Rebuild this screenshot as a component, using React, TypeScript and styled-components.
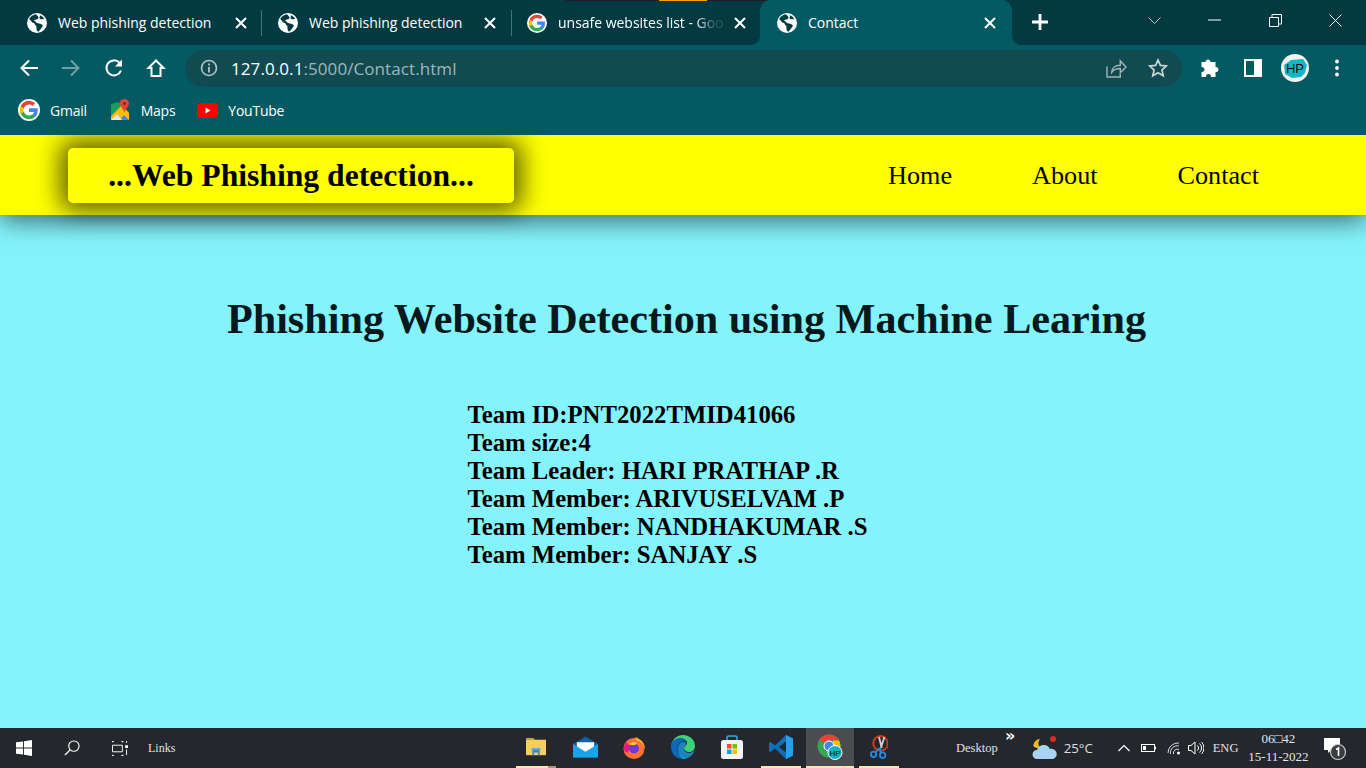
import React from "react";
import styled, { createGlobalStyle } from "styled-components";

const Global = createGlobalStyle`
  html, body { margin: 0; padding: 0; height: 100%; overflow: hidden; }
  body { font-family: "Liberation Serif", serif; background: #85f3fb; }
`;
const Page = styled.div`
  width: 1366px; height: 768px; display: flex; flex-direction: column; overflow: hidden; position: relative;
`;
const TabStrip = styled.div`
  height: 45px; flex: none; background: #033a42; display: flex; align-items: stretch; position: relative;
  font-family: "Open Sans", sans-serif; padding-left: 8px;
`;
const TopEdge = styled.div`
  position: absolute; left: 565px; top: 0; width: 240px; height: 1px;
  background: linear-gradient(90deg, #1c2024 0 94px, #f0a000 94px 142px, #1c2024 142px);
`;
const Tab = styled.div<{ $active?: boolean; $w: number; $pl: number; $pr: number }>`
  width: ${(p) => p.$w}px; flex: none; display: flex; align-items: center; box-sizing: border-box;
  padding: 0 ${(p) => p.$pr}px 0 ${(p) => p.$pl}px;
  color: #fff; font-size: 14px; position: relative; white-space: nowrap; height: 45px;
  ${(p) =>
    p.$active &&
    `background:#045a62; border-radius:10px 10px 0 0;
     &::before, &::after { content:""; position:absolute; bottom:0; width:10px; height:10px; }
     &::before { left:-10px; background: radial-gradient(circle at 0 0, transparent 10px, #045a62 10.5px); }
     &::after { right:-10px; background: radial-gradient(circle at 100% 0, transparent 10px, #045a62 10.5px); }`}
`;
const TabSep = styled.div`
  width: 1px; height: 26px; background: #4a7378; align-self: center; flex: none;
`;
const Favicon = styled.span`
  width: 20px; height: 20px; flex: none; margin-right: 11px; display: flex;
`;
const TabTitle = styled.span<{ $fade?: boolean }>`
  flex: 1; letter-spacing: -0.02px;
  ${(p) => p.$fade && "-webkit-mask-image: linear-gradient(90deg,#000 78%,rgba(0,0,0,.15) 90%);"}
`;
const CloseBox = styled.span`
  width: 14px; height: 14px; display: flex; flex: none;
`;
const NewTab = styled.div`
  width: 16px; height: 44px; margin-left: 20px; display: flex; align-items: center; flex: none;
`;
const WinControls = styled.div`
  margin-left: auto; display: flex; align-items: center; height: 40px; padding-right: 24px;
`;
const WinBtn = styled.span<{ $ml: number }>`
  display: flex; margin-left: ${(p) => p.$ml}px;
`;
const Toolbar = styled.div`
  height: 46px; flex: none; background: #045a62; display: flex; align-items: center; padding-left: 19px; box-sizing: border-box;
`;
const NavIcon = styled.span<{ $ml?: number }>`
  display: flex; width: 20px; height: 20px; margin-left: ${(p) => p.$ml ?? 0}px; flex: none;
`;
const Omnibox = styled.div`
  margin-left: 19px; width: 997px; height: 37px; border-radius: 19px; background: #124a52; flex: none;
  display: flex; align-items: center; padding: 0 14px 0 15px; box-sizing: border-box;
  font-family: "Open Sans", sans-serif; font-size: 17px; color: #9db8bb;
`;
const Host = styled.span`color: #fff;`;
const Url = styled.span`margin-left: 13px; letter-spacing: 0.08px;`;
const OmniRight = styled.div`margin-left: auto; display: flex; align-items: center; gap: 21px;`;
const Avatar = styled.span`
  width: 28px; height: 28px; margin-left: 18px; flex: none; display: flex;
`;
const Bookmarks = styled.div`
  height: 44px; flex: none; background: #045a62; display: flex; align-items: center; padding: 0 0 6px 18px; box-sizing: border-box;
  font-family: "Open Sans", sans-serif; font-size: 14px; color: #fff; letter-spacing: -0.25px;
`;
const Bookmark = styled.div<{ $icon: number; $mr: number }>`
  display: flex; align-items: center; gap: ${(p) => p.$icon}px; margin-right: ${(p) => p.$mr}px;
`;
const Site = styled.div`
  flex: 1; min-height: 0; background: #85f3fb; display: flex; flex-direction: column; overflow: hidden;
`;
const Navbar = styled.header`
  height: 80px; flex: none; background: #ffff00; box-shadow: 0 5px 25px rgba(0,0,0,.6); display: flex; align-items: center;
  padding: 0 107px 0 68px; box-sizing: border-box; position: relative;
`;
const Logo = styled.div`
  width: 446px; height: 55px; flex: none; margin-top: 1px; background: #ffff00; border-radius: 5px; box-shadow: 0 0 25px 8px rgba(0,0,0,.62);
  display: flex; align-items: center; justify-content: center; font-weight: bold; font-size: 31.65px; color: #000; white-space: nowrap;
`;
const NavLinks = styled.nav`
  margin-left: auto; display: flex; gap: 80px; font-size: 26.2px; color: #000; margin-top: 1px;
`;
const Main = styled.main`
  flex: 1; display: flex; flex-direction: column; align-items: center; padding-left: 7px;
`;
const Title = styled.h1`
  margin: 80px 0 0; font-size: 42.2px; line-height: 48px; font-weight: bold; color: #04191b; white-space: nowrap;
`;
const Team = styled.div`
  align-self: flex-start; margin: 58px 0 0 460.5px; font-weight: bold; font-size: 24.72px; line-height: 28px; color: #000; white-space: nowrap;
`;
const Taskbar = styled.footer`
  height: 40px; flex: none; background: #24272c; display: flex; align-items: center; position: relative; color: #e6e6e6;
`;
const StartGroup = styled.div`
  display: flex; align-items: center; width: 512px; flex: none; padding-left: 16px; box-sizing: border-box;
`;
const TbIcon = styled.span<{ $ml?: number }>`
  display: flex; margin-left: ${(p) => p.$ml ?? 0}px; flex: none;
`;
const SmallText = styled.span<{ $ml?: number; $size?: number; $sans?: boolean }>`
  font-family: ${(p) => (p.$sans ? '"Open Sans", sans-serif' : '"Liberation Serif", serif')};
  font-size: ${(p) => p.$size ?? 12}px; margin-left: ${(p) => p.$ml ?? 0}px; color: #e0e0e0; white-space: nowrap;
`;
const Apps = styled.div`
  display: flex; width: 392px; flex: none; height: 40px;
`;
const AppSlot = styled.div<{ $on?: boolean; $bar?: boolean; $split?: boolean }>`
  width: 48px; height: 40px; margin-right: 1px; flex: none; display: flex; align-items: center; justify-content: center; position: relative;
  padding-bottom: 3px; box-sizing: border-box;
  ${(p) => p.$on && "background:#4a4c50;"}
  &::after {
    content: ""; position: absolute; left: ${(p) => (p.$on ? 0 : 4)}px; right: ${(p) => (p.$on ? 0 : 4)}px; bottom: 0; height: 2px;
    background: ${(p) =>
      !p.$bar ? "transparent" : p.$split ? "linear-gradient(90deg,#fae6a5 80%,#a89a70 80%)" : "#fae6a5"};
  }
`;
const Tray = styled.div`
  flex: 1; display: flex; align-items: center; height: 40px; position: relative;
`;
const Clock = styled.div`
  margin-left: 9px; width: 62px; display: flex; flex-direction: column; align-items: center; font-size: 13px; line-height: 18px; color: #e6e6e6; white-space: nowrap;
`;
const Chevrons = styled.span`
  font-family: "DejaVu Sans", sans-serif; font-size: 16px; line-height: 16px; position: absolute; left: 101px; top: 0; color: #fff; font-weight: bold;
`;

const Globe = ({ s = 20 }: { s?: number }) => (
  <svg width={s} height={s} viewBox="0 0 20 20">
    <circle cx="10" cy="10" r="10" fill="#fff" />
    <path d="M9 1.200C6.500 1.500 3.500 3 2.200 6l3 3.200c.6.7 1.400.8 2 1 .5.2.6.8.7 1.400.1.8.8 1 1.400 1.200l.2 3c0 1.500 1 2.700 1.700 3l2-2c.6-1.300 1.700-2.300 2.300-3 .5-.8.2-1.800-.4-2.200-1-.7-2.700-1.200-4.300-1.400-1.100-.1-1.500-1-2-1.500L7 7.600c.6-.9 2.100-1 3.200-1.300.9-.4 1.300-1.200 1.200-2.300L9 1.200z" fill="#033a42" />
    <path d="M13 2.200c1.800.7 3.400 2 4.200 3.800l-2.400.3c-1 0-2.200-.4-2.300-1.600z" fill="#033a42" />
  </svg>
);
const GoogleG = ({ s = 22 }: { s?: number }) => (
  <svg width={s} height={s} viewBox="2 2 20 20">
    <circle cx="12" cy="12" r="10" fill="#fff" />
    <path d="M20 12.200c0-.6-.1-1.200-.2-1.700H12v3.300h4.500c-.2 1-.8 1.900-1.700 2.500v2.100h2.700c1.600-1.500 2.500-3.600 2.500-6.200z" fill="#4285F4" />
    <path d="M12 20.300c2.200 0 4.100-.7 5.500-2l-2.700-2.100c-.7.5-1.700.8-2.800.8-2.200 0-4-1.400-4.700-3.400H4.500v2.100c1.400 2.800 4.200 4.600 7.500 4.600z" fill="#34A853" />
    <path d="M7.300 13.600c-.4-1.100-.4-2.200 0-3.200V8.300H4.500c-1 1.900-1 5.300 0 7.400z" fill="#FBBC05" />
    <path d="M12 7c1.200 0 2.400.4 3.200 1.300l2.400-2.400C16.100 4.500 14.100 3.700 12 3.700c-3.300 0-6.100 1.800-7.500 4.600l2.800 2.100C8 8.400 9.800 7 12 7z" fill="#EA4335" />
  </svg>
);
const X = ({ c = "#fff" }: { c?: string }) => (
  <svg width="14" height="14" viewBox="0 0 14 14"><path d="M2 2l10 10M12 2L2 12" stroke={c} strokeWidth="2" /></svg>
);
const Maps = () => (
  <svg width="20" height="22" viewBox="0 0 20 22">
    <path d="M1 5l8-2 3 3L1 17z" fill="#1a9d5a" />
    <path d="M1 21v-4L12 6l7 8v7z" fill="#fbbc04" />
    <path d="M10 21l4-5 5 5z" fill="#4285f4" />
    <path d="M1 21l6-6 5 6z" fill="#e8e8e8" />
    <path d="M14.500 0c-3 0-4.600 2.200-4.600 4.400 0 2.800 3.300 5 4.600 9 1.300-4 4.500-6.200 4.500-9C19 2.200 17.400 0 14.500 0z" fill="#e0453a" />
    <circle cx="14.500" cy="4.500" r="1.600" fill="#8f1f1a" />
  </svg>
);
const YouTube = () => (
  <svg width="21" height="15" viewBox="0 0 21 15"><rect width="21" height="15" rx="3" fill="#f00" /><path d="M8.500 4.500l5 3-5 3z" fill="#fff" /></svg>
);

export default function App() {
  return (
    <Page>
      <Global />
      <TabStrip>
        <TopEdge />
        <Tab $w={253} $pl={19} $pr={13}>
          <Favicon><Globe /></Favicon>
          <TabTitle>Web phishing detection</TabTitle>
          <CloseBox><X /></CloseBox>
        </Tab>
        <TabSep />
        <Tab $w={249} $pl={16} $pr={14}>
          <Favicon><Globe /></Favicon>
          <TabTitle>Web phishing detection</TabTitle>
          <CloseBox><X /></CloseBox>
        </Tab>
        <TabSep />
        <Tab $w={248} $pl={15} $pr={13}>
          <Favicon><GoogleG s={20} /></Favicon>
          <TabTitle $fade>unsafe websites list - Goo</TabTitle>
          <CloseBox><X /></CloseBox>
        </Tab>
        <Tab $w={252} $active $pl={17} $pr={15}>
          <Favicon><Globe /></Favicon>
          <TabTitle>Contact</TabTitle>
          <CloseBox><X /></CloseBox>
        </Tab>
        <NewTab>
          <svg width="16" height="16" viewBox="0 0 16 16"><path d="M8 0v16M0 8h16" stroke="#fff" strokeWidth="2.800" /></svg>
        </NewTab>
        <WinControls>
          <WinBtn $ml={0}>
            <svg width="13" height="7" viewBox="0 0 13 7"><path d="M.5.5l6 6 6-6" stroke="#b8c8ca" fill="none" /></svg>
          </WinBtn>
          <WinBtn $ml={47}>
            <svg width="13" height="2" viewBox="0 0 13 2"><path d="M0 1h13" stroke="#fff" /></svg>
          </WinBtn>
          <WinBtn $ml={48}>
            <svg width="13" height="13" viewBox="0 0 13 13"><path d="M.5 3.500h9v9h-9zM3 3.500V.5h9.500v9.500H9.500" stroke="#fff" fill="none" /></svg>
          </WinBtn>
          <WinBtn $ml={47}>
            <svg width="13" height="13" viewBox="0 0 13 13"><path d="M.5.5l12 12M12.500.5l-12 12" stroke="#fff" fill="none" /></svg>
          </WinBtn>
        </WinControls>
      </TabStrip>
      <Toolbar>
        <NavIcon>
          <svg width="20" height="20" viewBox="0 0 20 20"><path d="M19 10H3M10 2.500L2.500 10l7.500 7.500" stroke="#fff" strokeWidth="2" fill="none" /></svg>
        </NavIcon>
        <NavIcon $ml={22}>
          <svg width="20" height="20" viewBox="0 0 20 20"><path d="M1 10h16M10 2.500l7.500 7.500-7.500 7.500" stroke="#6f9fa3" strokeWidth="2" fill="none" /></svg>
        </NavIcon>
        <NavIcon $ml={23}>
          <svg width="20" height="20" viewBox="0 0 20 20"><path d="M17 12.500A7.500 7.500 0 1 1 15.500 4.800" stroke="#fff" strokeWidth="2" fill="none" /><path d="M18 1.500v7h-7z" fill="#fff" /></svg>
        </NavIcon>
        <NavIcon $ml={22}>
          <svg width="20" height="20" viewBox="0 0 20 20"><path d="M10 2.500L2.500 10h3v8h9v-8h3z" stroke="#fff" strokeWidth="2" fill="none" /></svg>
        </NavIcon>
        <Omnibox>
          <svg width="18" height="18" viewBox="0 0 18 18"><circle cx="9" cy="9" r="7.500" stroke="#b5c6c8" strokeWidth="1.600" fill="none" /><path d="M9 8v5.500M9 4.500v2" stroke="#b5c6c8" strokeWidth="1.800" /></svg>
          <Url><Host>127.0.0.1</Host>:5000/Contact.html</Url>
          <OmniRight>
            <svg width="21" height="19" viewBox="0 0 22 20"><path d="M1 8v11h14v-5M6 14c0-5 4-7.500 9-7.500V2l6 6.500-6 6V10c-4 0-7 1-9 4z" stroke="#a0b4b6" strokeWidth="1.500" fill="none" /></svg>
            <svg width="20" height="20" viewBox="0 0 20 20"><path d="M10 2l2.400 5.400 5.900.6-4.400 4 1.300 5.800L10 14.800l-5.200 3 1.300-5.800-4.400-4 5.900-.6z" stroke="#c8d4d5" strokeWidth="1.700" fill="none" /></svg>
          </OmniRight>
        </Omnibox>
        <NavIcon $ml={18}>
          <svg width="20" height="20" viewBox="0 0 20 20"><path d="M8 1.500c1.400 0 2.500 1 2.500 2.500h5v5c1.500-.4 3 .8 3 2.500s-1.500 3-3 2.500v5h-4.500c.3-1.500-.8-3-2.500-3s-2.800 1.500-2.500 3H1.500v-5c1.500.3 3-.8 3-2.500S3 8.700 1.500 9V4h4C5.500 2.500 6.600 1.500 8 1.500z" fill="#fff" /></svg>
        </NavIcon>
        <NavIcon $ml={23}>
          <svg width="20" height="20" viewBox="0 0 20 20"><path fillRule="evenodd" d="M1 1h18v18H1zM3 3v14h8V3z" fill="#fff" /></svg>
        </NavIcon>
        <Avatar>
          <svg width="28" height="28" viewBox="0 0 28 28">
            <circle cx="14" cy="14" r="14" fill="#f2f2ee" />
            <path d="M3 11l7-5 12-1 4 6-2 8-4 4-9 1-7-4z" fill="#12b9c4" />
            <text x="14" y="19" textAnchor="middle" fontFamily="Liberation Sans, sans-serif" fontSize="13" fill="#0a0a0a">HP</text>
          </svg>
        </Avatar>
        <NavIcon $ml={18}>
          <svg width="20" height="20" viewBox="0 0 20 20"><circle cx="10" cy="3.500" r="1.900" fill="#fff" /><circle cx="10" cy="10" r="1.900" fill="#fff" /><circle cx="10" cy="16.500" r="1.900" fill="#fff" /></svg>
        </NavIcon>
      </Toolbar>
      <Bookmarks>
        <Bookmark $icon={10} $mr={23}><GoogleG /><span>Gmail</span></Bookmark>
        <Bookmark $icon={11} $mr={22}><Maps /><span>Maps</span></Bookmark>
        <Bookmark $icon={10} $mr={0}><YouTube /><span>YouTube</span></Bookmark>
      </Bookmarks>
      <Site>
        <Navbar>
          <Logo>...Web Phishing detection...</Logo>
          <NavLinks>
            <span>Home</span>
            <span>About</span>
            <span>Contact</span>
          </NavLinks>
        </Navbar>
        <Main>
          <Title>Phishing Website Detection using Machine Learing</Title>
          <Team>
            <div>Team ID:PNT2022TMID41066</div>
            <div>Team size:4</div>
            <div>Team Leader: HARI PRATHAP .R</div>
            <div>Team Member: ARIVUSELVAM .P</div>
            <div>Team Member: NANDHAKUMAR .S</div>
            <div>Team Member: SANJAY .S</div>
          </Team>
        </Main>
      </Site>
      <Taskbar>
        <StartGroup>
          <svg width="16" height="16" viewBox="0 0 17 17"><path d="M0 2.500l7.500-1V8H0zM8.500 1.300L17 0v8H8.500zM0 9h7.500v6.500l-7.500-1zM8.500 9H17v8l-8.500-1.300z" fill="#fff" /></svg>
          <TbIcon $ml={32}>
            <svg width="16" height="16" viewBox="0 0 17 17"><circle cx="10.500" cy="6.500" r="5.500" stroke="#fff" strokeWidth="1.200" fill="none" /><path d="M6.500 10.500L1 16" stroke="#fff" strokeWidth="1.400" /></svg>
          </TbIcon>
          <TbIcon $ml={32}>
            <svg width="16" height="15" viewBox="0 0 17 16"><path d="M0 .5h2M10 .5h2M.5 4.500h10.500v7H.5zM0 15.500h2M10 15.500h2M0 .5v1M11.500 .5v1M0 15.500v-1M11.500 15.500v-1" stroke="#fff" fill="none" /><rect x="14" y="4.500" width="3" height="3" fill="#fff" /><path d="M15.500 9v6M15.500 0v2" stroke="#fff" /></svg>
          </TbIcon>
          <SmallText $ml={20}>Links</SmallText>
        </StartGroup>
        <Apps>
          <AppSlot $bar $split>
            <svg width="22" height="20" viewBox="0 0 24 22"><path d="M1 1h8l2 2H1z" fill="#d9a53b" /><path d="M1 3h22v17H1z" fill="#f7cf5f" /><path d="M8 12h8v8h-2v-3h-4v3H8z" fill="#3b88c9" /><path d="M7 12h10v2H7z" fill="#62b0e6" /></svg>
          </AppSlot>
          <AppSlot>
            <svg width="25" height="22" viewBox="0 0 26 22"><path d="M0 8L13 0l13 8v14H0z" fill="#0e5fa8" /><path d="M4 6h18v6l-9 5-9-5z" fill="#fff" /><path d="M0 8l13 8 13-8v14H0z" fill="#19a3e8" /></svg>
          </AppSlot>
          <AppSlot>
            <svg width="24" height="24" viewBox="0 0 24 24"><circle cx="12" cy="13.500" r="10.500" fill="#ff7139" /><path d="M13 2c6 2 10 6 10 12-2-6-5-8-8-8z" fill="#ffb129" /><path d="M2 14c0-3 1-5 3-7 0 2 1 3 3 3l-2 8c-2-1-4-2-4-4z" fill="#e31587" /><circle cx="12" cy="13.500" r="5" fill="#6e3cc8" /><path d="M7 9c2-2 6-2 8-1l-2 2c-2 0-4 0-6-1z" fill="#ffcd3c" /></svg>
          </AppSlot>
          <AppSlot>
            <svg width="24" height="24" viewBox="0 0 24 24"><path d="M12 0c7 0 12 5 12 11 0 4-3 6-6 6-2 0-4-1-5-3 0-3 3-3 3-6 0-3-3-5-7-4C5 5 2 7 0 11 1 5 5 0 12 0z" fill="#3dd178" /><path d="M0 12C0 6 5 3 9 3c4 0 6 2 6 5-1-2-3-2-5-1-3 1-4 5-3 9 1 4 5 7 9 7-2 1-3 1-4 1C5 24 0 19 0 12z" fill="#0c68b8" /><path d="M7 14c0-4 2-7 5-7 1 0 3 0 3 2 0 3-3 3-2 6 1 2 3 3 5 3 2 0 4-1 6-3-2 5-6 9-12 9-3-2-5-6-5-10z" fill="#1b9de2" opacity=".8" /></svg>
          </AppSlot>
          <AppSlot>
            <svg width="24" height="24" viewBox="0 0 24 24"><path d="M7 6V2.500C7 1.500 8 1 9 1h6c1 0 2 .5 2 1.500V6" stroke="#2fa9dc" strokeWidth="1.600" fill="none" /><rect x="1" y="5" width="22" height="19" rx="2.500" fill="#f3f3f3" /><rect x="7" y="9" width="4.500" height="4.500" fill="#f25022" /><rect x="12.500" y="9" width="4.500" height="4.500" fill="#7fba00" /><rect x="7" y="14.500" width="4.500" height="4.500" fill="#00a4ef" /><rect x="12.500" y="14.500" width="4.500" height="4.500" fill="#ffb900" /></svg>
          </AppSlot>
          <AppSlot $bar>
            <svg width="24" height="24" viewBox="0 0 24 24"><path d="M17 0l7 3.500v17L17 24 6 13.500 1.500 17 0 16V8l1.500-1L6 10.500z" fill="#0f6fb5" /><path d="M17 0l7 3.500v17L17 24z" fill="#25a0ee" /><path d="M17 6.500L10 12l7 5.500z" fill="#24272c" /></svg>
          </AppSlot>
          <AppSlot $on $bar>
            <svg width="26" height="26" viewBox="0 0 26 26"><circle cx="12" cy="12" r="11.500" fill="#34a853" /><path d="M12 .5A11.500 11.500 0 0 1 22 6.500H12a5.500 5.500 0 0 0-5 3L2.300 5.500A11.500 11.500 0 0 1 12 .5z" fill="#ea4335" /><path d="M22 6.500a11.500 11.500 0 0 1-9 17l3-7V6.500z" fill="#fbbc04" /><circle cx="12" cy="12" r="5" fill="#4285f4" stroke="#fff" /><circle cx="18" cy="18.500" r="7" fill="#0fb6c0" stroke="#fff" /><text x="18" y="21.500" textAnchor="middle" fontFamily="Liberation Sans, sans-serif" fontSize="8" fill="#0a0a0a">HP</text></svg>
          </AppSlot>
          <AppSlot $bar>
            <svg width="20" height="26" viewBox="0 0 22 26"><path d="M18 3A8 8 0 1 0 18 15" stroke="#c8371c" strokeWidth="2.500" fill="none" /><path d="M18 3l2 3v7l-2 2" stroke="#c8371c" strokeWidth="2" fill="none" /><path d="M11 2l3 12M17 2l-4 12" stroke="#d0d0d0" strokeWidth="2" /><circle cx="5" cy="21" r="3" stroke="#1f8ae0" strokeWidth="2" fill="none" /><circle cx="15" cy="22" r="3" stroke="#1f8ae0" strokeWidth="2" fill="none" /><path d="M7 19l5-5M13 20l-1-6" stroke="#1f8ae0" strokeWidth="2" /></svg>
          </AppSlot>
        </Apps>
        <Tray>
          <SmallText $ml={52} $size={12.5}>Desktop</SmallText>
          <Chevrons>»</Chevrons>
          <TbIcon $ml={34}>
            <svg width="26" height="24" viewBox="0 0 26 24"><circle cx="21" cy="3" r="3" fill="#d62d20" /><path d="M8 3a7 7 0 0 0 3 11L2 11c-2-3 2-8 6-8z" fill="#f5b921" /><path d="M5 23a4.500 4.500 0 0 1 0-9 7 7 0 0 1 13-1 5 5 0 0 1 3 10z" fill="#a9d3f2" /></svg>
          </TbIcon>
          <SmallText $ml={6} $size={13.2} $sans>25°C</SmallText>
          <TbIcon $ml={25}>
            <svg width="12" height="8" viewBox="0 0 12 8"><path d="M.5 7L6 1.500 11.500 7" stroke="#fff" strokeWidth="1.200" fill="none" /></svg>
          </TbIcon>
          <TbIcon $ml={11}>
            <svg width="15" height="8" viewBox="0 0 15 8"><rect x=".5" y=".5" width="13" height="7" stroke="#fff" fill="none" /><rect x="2" y="2" width="3" height="4" fill="#fff" /><rect x="14" y="2.500" width="1" height="3" fill="#fff" /></svg>
          </TbIcon>
          <TbIcon $ml={11}>
            <svg width="14" height="13" viewBox="0 0 14 13"><path d="M1 11A10 10 0 0 1 12 1M3.500 12A7 7 0 0 1 12 4M6.500 12A4 4 0 0 1 12 7.500" stroke="#d8d8d8" fill="none" /><circle cx="11.500" cy="11" r="1.500" fill="#fff" /></svg>
          </TbIcon>
          <TbIcon $ml={7}>
            <svg width="16" height="14" viewBox="0 0 16 14"><path d="M.5 4.500H3L7 1v12L3 9.500H.5z" stroke="#fff" fill="none" /><path d="M9.500 4.500a3.500 3.500 0 0 1 0 5M11.500 2.500a6 6 0 0 1 0 9M13.500 1a8.500 8.500 0 0 1 0 12" stroke="#fff" fill="none" /></svg>
          </TbIcon>
          <SmallText $ml={9} $size={12.5}>ENG</SmallText>
          <Clock>
            <span>06□42</span>
            <span>15-11-2022</span>
          </Clock>
          <TbIcon $ml={14}>
            <svg width="24" height="26" viewBox="0 0 24 26"><path d="M1 3h16v12H8l-3 3v-3H1z" fill="#fff" /><circle cx="15" cy="17" r="7.500" fill="#3a3c40" stroke="#ccc" strokeWidth="1.200" /><path d="M13 14.500l2.500-1.500v8" stroke="#fff" strokeWidth="1.600" fill="none" /></svg>
          </TbIcon>
        </Tray>
      </Taskbar>
    </Page>
  );
}
